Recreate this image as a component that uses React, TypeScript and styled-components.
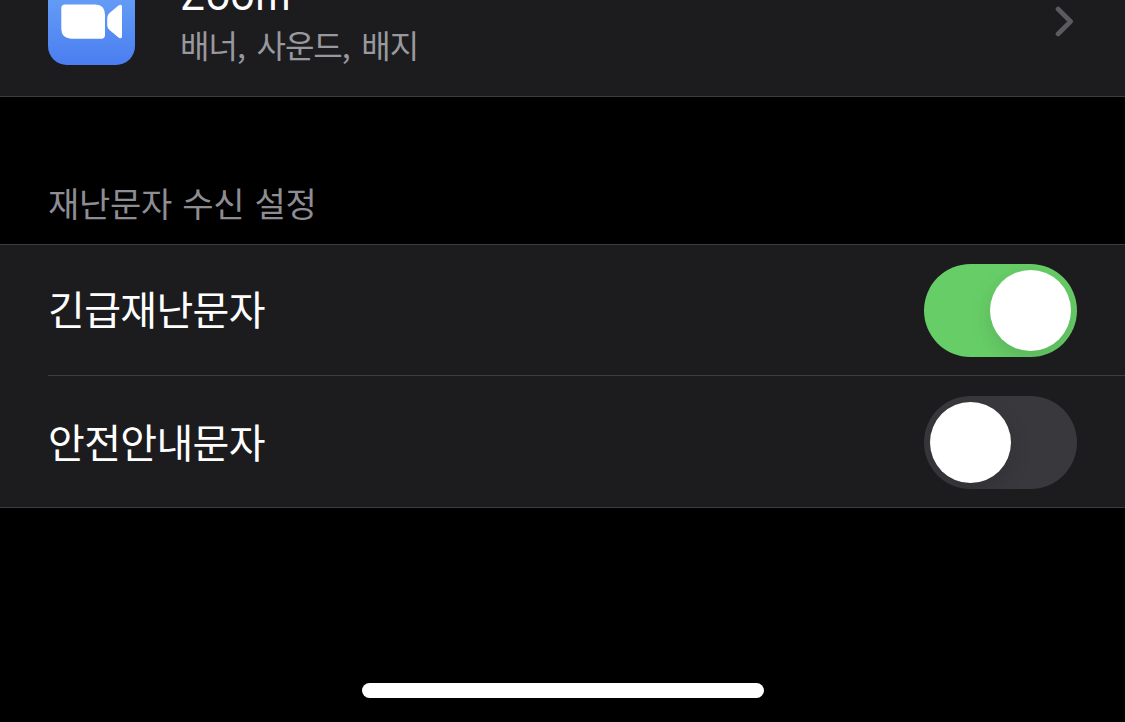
import { useState } from 'react'
import styled, { createGlobalStyle } from 'styled-components'

interface ToggleProps {
  isOn: boolean
  label: string
  onToggle: () => void
}

interface AlertRowProps {
  title: string
  defaultOn: boolean
  isLast: boolean
}

const GlobalStyle = createGlobalStyle`
  * {
    box-sizing: border-box;
  }

  body {
    margin: 0;
    background: #000;
    font-family: Inter, 'Noto Sans CJK KR', sans-serif;
  }
`

const Screen = styled.main`
  display: flex;
  flex-direction: column;
  width: 1125px;
  height: 722px;
  overflow: hidden;
  background: #000;
`

const AppList = styled.section`
  display: flex;
  flex-direction: column;
  justify-content: flex-end;
  height: 97px;
  overflow: hidden;
  background: #1c1c1e;
  border-bottom: 1px solid #3d3d41;
`

const AppRow = styled.div`
  display: flex;
  flex-shrink: 0;
  align-items: center;
  height: 149px;
  padding: 0 51px 0 48px;
`

const AppIcon = styled.svg`
  flex-shrink: 0;
  width: 87px;
  height: 87px;
`

const AppText = styled.div`
  display: flex;
  flex: 1;
  flex-direction: column;
  margin-left: 45px;
  padding-bottom: 6px;
`

const AppName = styled.p`
  margin: 0;
  color: #fff;
  font-size: 41px;
  line-height: 50px;
`

const AppDetail = styled.p`
  margin: 0;
  color: #98989f;
  font-family: 'Noto Sans CJK KR', sans-serif;
  font-size: 32px;
  font-weight: 400;
  line-height: 48px;
  letter-spacing: -1px;
  word-spacing: 5.5px;
`

const Chevron = styled.svg`
  width: 20px;
  height: 32px;
`

const SectionTitle = styled.h2`
  display: flex;
  align-items: flex-end;
  height: 147px;
  margin: 0;
  padding: 0 48px 15px;
  color: #8d8d93;
  font-family: 'Noto Sans CJK KR', sans-serif;
  font-size: 34px;
  font-weight: 400;
  line-height: 52px;
  letter-spacing: -0.3px;
  word-spacing: 3px;
`

const AlertList = styled.section`
  background: #1c1c1e;
  border-top: 1px solid #3d3d41;
  border-bottom: 1px solid #3d3d41;
`

const StyledAlertRow = styled.div<{ $isLast: boolean }>`
  display: flex;
  align-items: center;
  justify-content: space-between;
  height: 131px;
  margin-left: 48px;
  padding-right: 48px;
  padding-top: ${props => (props.$isLast ? '2px' : '0')};
  border-bottom: ${props => (props.$isLast ? 'none' : '1px solid #3d3d41')};
`

const AlertTitle = styled.span`
  padding-bottom: 4px;
  color: #fff;
  font-family: 'Noto Sans CJK KR', sans-serif;
  font-size: 40px;
  font-weight: 400;
  line-height: 60px;
  letter-spacing: -0.65px;
`

const Track = styled.button<{ $isOn: boolean }>`
  display: flex;
  justify-content: ${props => (props.$isOn ? 'flex-end' : 'flex-start')};
  width: 153px;
  height: 93px;
  padding: 6px;
  overflow: hidden;
  border: 0;
  border-radius: 47px;
  background: ${props => (props.$isOn ? '#67ce67' : '#39393d')};
  cursor: pointer;
`

const Knob = styled.span`
  width: 81px;
  height: 81px;
  border-radius: 50%;
  background: #fff;
  box-shadow: 0 8px 22px rgba(0, 0, 0, 0.13);
`

const HomeArea = styled.footer`
  display: flex;
  flex: 1;
  align-items: flex-end;
  justify-content: center;
  padding-bottom: 24px;
`

const HomeIndicator = styled.div`
  width: 402px;
  height: 15px;
  margin-left: 1px;
  border-radius: 8px;
  background: #fff;
`

const alerts = [
  { title: '긴급재난문자', defaultOn: true },
  { title: '안전안내문자', defaultOn: false },
]

const ZoomIcon = () => (
  <AppIcon viewBox="0 0 87 87">
    <defs>
      <linearGradient id="zoom-blue" x1="0" y1="0" x2="0" y2="1">
        <stop offset="0" stopColor="#6ba5f8" />
        <stop offset="1" stopColor="#4a7ef0" />
      </linearGradient>
    </defs>
    <rect width="87" height="87" rx="19" fill="url(#zoom-blue)" />
    <path
      d="M17 26.5H47.5Q57 27 57 36.5V57Q57 60.7 53.3 60.7H23Q13.3 60 13.3 51V30.2Q13.3 26.5 17 26.5Z"
      fill="#fff"
    />
    <path
      d="M61.5 35L70.5 27.6Q74 25.4 74 29V58Q74 61.6 70.5 59.4L61.5 52Q59.2 50 59.2 47V40Q59.2 37 61.5 35Z"
      fill="#fff"
    />
  </AppIcon>
)

const Toggle: React.FC<ToggleProps> = ({ isOn, label, onToggle }) => (
  <Track $isOn={isOn} role="switch" aria-checked={isOn} aria-label={label} onClick={onToggle}>
    <Knob />
  </Track>
)

const AlertRow: React.FC<AlertRowProps> = ({ title, defaultOn, isLast }) => {
  const [isOn, setIsOn] = useState(defaultOn)

  return (
    <StyledAlertRow $isLast={isLast}>
      <AlertTitle>{title}</AlertTitle>
      <Toggle isOn={isOn} label={title} onToggle={() => setIsOn(!isOn)} />
    </StyledAlertRow>
  )
}

const App = () => (
  <>
    <GlobalStyle />
    <Screen>
      <AppList>
        <AppRow>
          <ZoomIcon />
          <AppText>
            <AppName>Zoom</AppName>
            <AppDetail>배너, 사운드, 배지</AppDetail>
          </AppText>
          <Chevron viewBox="0 0 20 32" fill="none">
            <path
              d="M4 3L16.6 15.5L4 28"
              stroke="#5b5b5f"
              strokeWidth="4.6"
              strokeLinecap="round"
              strokeLinejoin="round"
            />
          </Chevron>
        </AppRow>
      </AppList>
      <SectionTitle>재난문자 수신 설정</SectionTitle>
      <AlertList>
        {alerts.map((alert, index) => (
          <AlertRow key={alert.title} {...alert} isLast={index === alerts.length - 1} />
        ))}
      </AlertList>
      <HomeArea>
        <HomeIndicator />
      </HomeArea>
    </Screen>
  </>
)

export default App
